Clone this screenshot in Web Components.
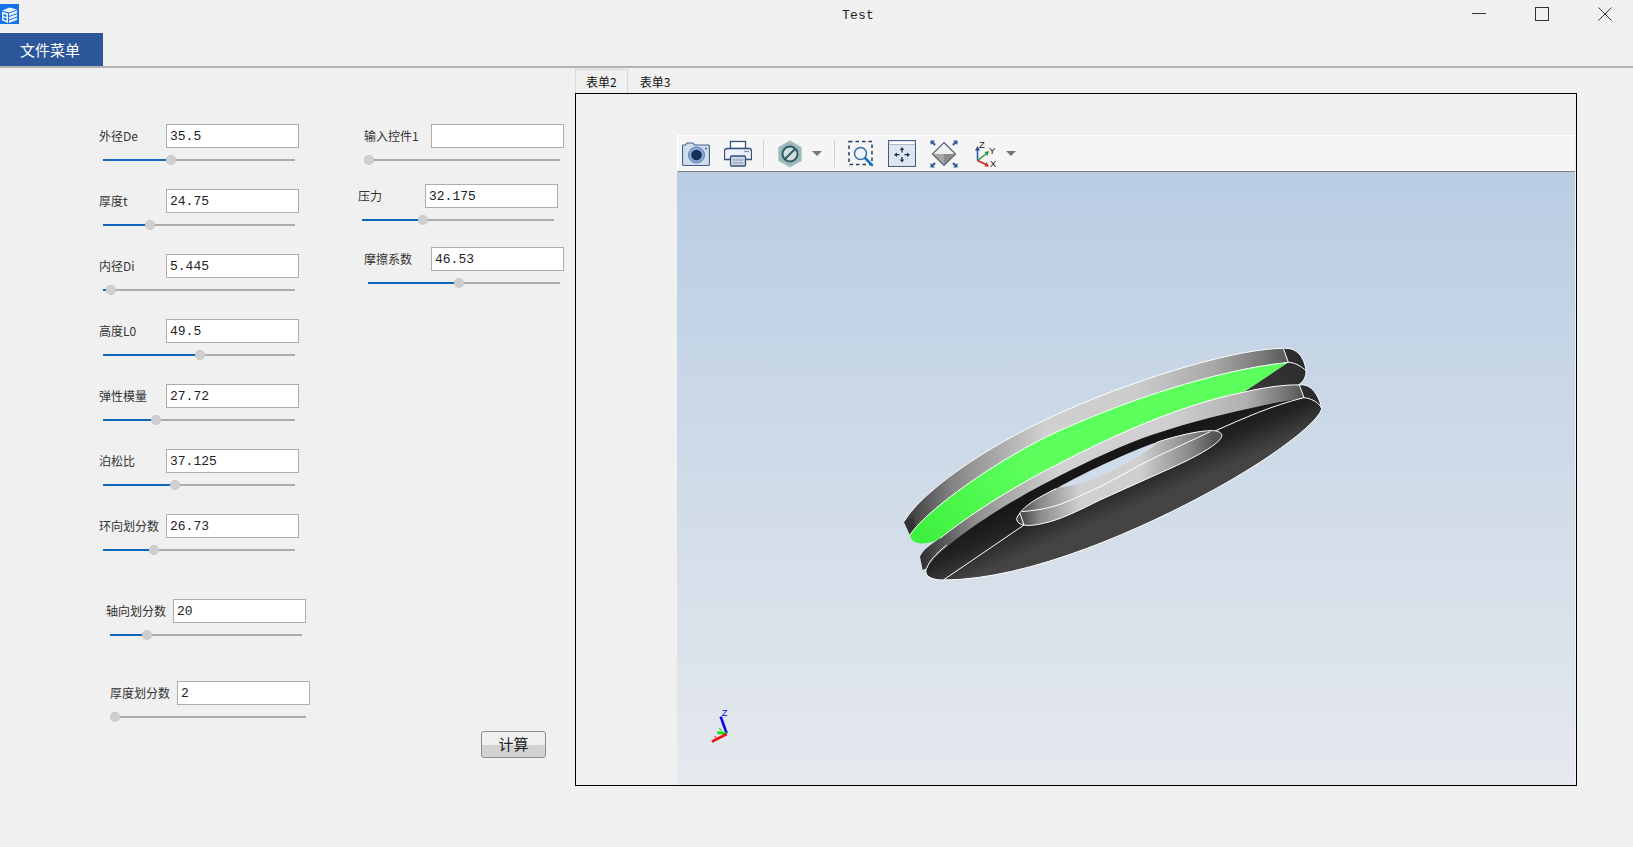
<!DOCTYPE html>
<html lang="zh">
<head>
<meta charset="utf-8">
<title>Test</title>
<style>
  html, body { margin: 0; height: 100%; background: #f0f0f0; overflow: hidden; }
  body { font-family: "Noto Sans CJK SC", "Liberation Sans", sans-serif; }
</style>
</head>
<body>
<app-window>
  <title-bar slot="top" caption="Test"></title-bar>
  <menu-bar slot="top" caption="文件菜单"></menu-bar>
  <form-panel slot="left">
    <form-field label="外径De" value="35.5" pos="68"></form-field>
    <form-field label="厚度t" value="24.75" pos="47"></form-field>
    <form-field label="内径Di" value="5.445" pos="8"></form-field>
    <form-field label="高度L0" value="49.5" pos="97"></form-field>
    <form-field label="弹性模量" value="27.72" pos="53"></form-field>
    <form-field label="泊松比" value="37.125" pos="72"></form-field>
    <form-field label="环向划分数" value="26.73" pos="51" gap="37"></form-field>
    <form-field label="轴向划分数" value="20" pos="37" shift="7" gap="34"></form-field>
    <form-field label="厚度划分数" value="2" pos="1" shift="11"></form-field>

    <form-field slot="right" label="输入控件1" value="" pos="1" gap="12"></form-field>
    <form-field slot="right" label="压力" value="32.175" pos="61" shift="-6" gap="15"></form-field>
    <form-field slot="right" label="摩擦系数" value="46.53" pos="91" gap="0"></form-field>
    <push-button slot="right" caption="计算"></push-button>
  </form-panel>
  <tab-view slot="right" first="表单2" second="表单3">
    <view-port>
      <view-toolbar slot="bar"></view-toolbar>
      <part-model></part-model>
      <axis-triad></axis-triad>
    </view-port>
  </tab-view>
</app-window>

<script>
class AppWindow extends HTMLElement {
  connectedCallback() {
    this.attachShadow({ mode: 'open' });
    this.shadowRoot.innerHTML = `
      <style>
        :host { display: flex; flex-direction: column; width: 1633px; height: 847px; background: #f0f0f0; }
        .main { display: flex; align-items: flex-start; }
      </style>
      <slot name="top"></slot>
      <div class="main">
        <slot name="left"></slot>
        <slot name="right"></slot>
      </div>
    `;
  }
}

class TitleBar extends HTMLElement {
  connectedCallback() {
    this.attachShadow({ mode: 'open' });
    this.shadowRoot.innerHTML = `
      <style>
        :host { display: grid; grid-template-columns: 842px auto 1fr; height: 33px; align-items: start; }
        .logo { display: block; margin-top: 4px; }
        .caption { font: 13px/31px "Liberation Mono", monospace; color: #222; letter-spacing: .2px; }
        .controls { display: flex; justify-content: flex-end; gap: 49px; padding: 7px 21px 0 0; }
        .controls svg { display: block; }
      </style>
      <svg class="logo" width="19" height="20" viewBox="0 0 19 20">
        <rect width="19" height="20" fill="#1473e6"/>
        <path d="M2 6.500 L9.500 3.500 L17 5.500 L9 8.500 Z" fill="#f2f7fd"/>
        <path d="M2 7.500 L8 9.500 V19 L2 16.500 Z" fill="#e6f0fb"/>
        <path d="M3.500 10 L6.500 11 V13 L3.500 12 Z M3.500 13.500 L6.500 14.500 V16.500 L3.500 15.500 Z" fill="#1473e6"/>
        <path d="M9 9.500 L17 6.500 V9 L9 12 Z M9 13 L17 10 V12.500 L9 15.500 Z M9 16.500 L17 13.500 V16 L9 19 Z" fill="#f2f7fd"/>
      </svg>
      <div class="caption">${this.getAttribute('caption')}</div>
      <div class="controls">
        <svg width="14" height="14" viewBox="0 0 14 14"><path d="M0 6.500 H14" stroke="#333" stroke-width="1"/></svg>
        <svg width="14" height="14" viewBox="0 0 14 14"><rect x="0.500" y="0.500" width="13" height="13" fill="none" stroke="#333" stroke-width="1"/></svg>
        <svg width="14" height="14" viewBox="0 0 14 14"><path d="M0.500 0.500 L13.500 13.500 M13.500 0.500 L0.500 13.500" stroke="#333" stroke-width="1"/></svg>
      </div>
    `;
  }
}

class MenuBar extends HTMLElement {
  connectedCallback() {
    this.attachShadow({ mode: 'open' });
    this.shadowRoot.innerHTML = `
      <style>
        :host { display: block; height: 33px; border-bottom: 2px solid #b2b2b2; }
        .item {
          width: 103px; height: 33px; box-sizing: border-box; padding-right: 3px; background: #2b579a; color: #fff;
          font-size: 15px; line-height: 33px; text-align: center;
        }
      </style>
      <div class="item">${this.getAttribute('caption')}</div>
    `;
  }
}

class FormPanel extends HTMLElement {
  connectedCallback() {
    this.attachShadow({ mode: 'open' });
    this.shadowRoot.innerHTML = `
      <style>
        :host { display: flex; width: 575px; flex: none; box-sizing: border-box; padding: 56px 0 0 99px; }
        .col { display: flex; flex-direction: column; width: 265px; flex: none; }
      </style>
      <div class="col"><slot></slot></div>
      <div class="col"><slot name="right"></slot></div>
    `;
  }
}

class FormField extends HTMLElement {
  connectedCallback() {
    const pos = Number(this.getAttribute('pos'));
    const shift = this.getAttribute('shift') || 0;
    const gap = this.getAttribute('gap') || 17;
    this.attachShadow({ mode: 'open' });
    this.shadowRoot.innerHTML = `
      <style>
        :host { display: block; height: 48px; margin-left: ${shift}px; margin-bottom: ${gap}px; flex: none; }
        .row { display: flex; align-items: center; height: 24px; }
        .label { width: 67px; flex: none; font-size: 12px; color: #333; white-space: nowrap; padding-bottom: 2px; }
        .input {
          width: 133px; height: 24px; box-sizing: border-box; border: 1px solid #adadad; background: #fff;
          padding: 2px 0 0 3px; font: 13px/20px "Liberation Mono", monospace; color: #222;
        }
        .track { position: relative; width: 192px; height: 2px; margin: 11px 0 0 4px; background: #acacac; }
        .fill { position: absolute; left: 0; top: 0; height: 2px; width: ${pos}px; background: #0f68bb; }
        .thumb {
          position: absolute; left: ${pos - 5}px; top: -4px; width: 10px; height: 10px; border-radius: 50%;
          background: #cfcfcf; outline: 1px dotted #c4c4c4; outline-offset: -1px;
        }
      </style>
      <div class="row">
        <div class="label">${this.getAttribute('label')}</div>
        <div class="input">${this.getAttribute('value')}</div>
      </div>
      <div class="track"><div class="fill"></div><div class="thumb"></div></div>
    `;
  }
}

class PushButton extends HTMLElement {
  connectedCallback() {
    this.attachShadow({ mode: 'open' });
    this.shadowRoot.innerHTML = `
      <style>
        :host {
          display: block; width: 65px; height: 27px; box-sizing: border-box; margin: 436px 0 0 117px;
          border: 1px solid #8c8c8c; border-radius: 3px; flex: none;
          background: linear-gradient(#f0f0f0 0 50%, #d2d2d2 50% 100%);
          font-size: 15px; line-height: 23px; text-align: center; color: #222;
        }
      </style>
      ${this.getAttribute('caption')}
    `;
  }
}

class TabView extends HTMLElement {
  connectedCallback() {
    this.attachShadow({ mode: 'open' });
    this.shadowRoot.innerHTML = `
      <style>
        :host { display: block; width: 1002px; flex: none; margin-top: 1px; font-size: 12px; color: #111; }
        .tabs { display: flex; height: 24px; }
        .tab { box-sizing: border-box; height: 24px; padding: 0 12px; line-height: 26px; }
        .tab.on { border: 1px solid #d9d9d9; border-bottom: 0; padding: 0 10px; line-height: 24px; }
        .pane { box-sizing: border-box; height: 693px; border: 1px solid #000; padding: 41px 1px 0 101px; }
      </style>
      <div class="tabs">
        <div class="tab on">${this.getAttribute('first')}</div>
        <div class="tab">${this.getAttribute('second')}</div>
      </div>
      <div class="pane"><slot></slot></div>
    `;
  }
}

class ViewPort extends HTMLElement {
  connectedCallback() {
    this.attachShadow({ mode: 'open' });
    this.shadowRoot.innerHTML = `
      <style>
        :host { display: flex; flex-direction: column; height: 650px; }
        .scene { position: relative; flex: 1; background: linear-gradient(#b9cde3, #e6e9ee); }
      </style>
      <slot name="bar"></slot>
      <div class="scene"><slot></slot></div>
    `;
  }
}

class ViewToolbar extends HTMLElement {
  connectedCallback() {
    this.attachShadow({ mode: 'open' });
    this.shadowRoot.innerHTML = `
      <style>
        :host {
          display: flex; align-items: center; height: 37px; box-sizing: border-box; padding-left: 4px;
          background: #f5f5f5; border-top: 1px solid #fff; border-left: 1px solid #fff; border-bottom: 1px solid #7f7f7f;
          flex: none;
        }
        svg { display: block; flex: none; }
        .sep { width: 1px; height: 27px; background: #d2d2d2; flex: none; }
        .arrow { width: 0; height: 0; border: 5px solid transparent; border-top: 5px solid #777; border-bottom: 0; flex: none; }
      </style>
      <!-- camera -->
      <svg width="28" height="28" viewBox="0 0 28 28">
        <path d="M1.500 5 H3.500 L5 3 H11 L12.500 5 H26 Q27.500 5 27.500 6.500 V24 Q27.500 25.500 26 25.500 H2 Q0.500 25.500 0.500 24 V6.500 Q0.500 5 1.500 5 Z" fill="#cfddef" stroke="#42608f" stroke-width="1.200"/>
        <circle cx="14.500" cy="15" r="8" fill="#8ea9cf" stroke="#5f80ae"/>
        <circle cx="14.500" cy="15" r="5.300" fill="#15305f"/>
        <circle cx="24" cy="8.500" r="1" fill="#42608f"/>
      </svg>
      <!-- printer -->
      <svg style="margin-left:14px" width="28" height="28" viewBox="0 0 28 28">
        <rect x="6.500" y="1.500" width="15" height="7" fill="#fff" stroke="#33527f" stroke-width="1.300"/>
        <path d="M3 8.500 H25 Q27.500 8.500 27.500 11 V19.500 H0.500 V11 Q0.500 8.500 3 8.500 Z" fill="#eef2f8" stroke="#33527f" stroke-width="1.300"/>
        <rect x="6.500" y="16" width="15" height="10" rx="1" fill="#cdd6e3" stroke="#33527f" stroke-width="1.300"/>
        <path d="M9 20 H19 M9 23 H19" stroke="#8798b2" stroke-width="1"/>
        <path d="M20 11.500 H25" stroke="#8798b2" stroke-width="1.500"/>
      </svg>
      <div class="sep" style="margin-left:11px"></div>
      <!-- no-show -->
      <svg style="margin-left:14px" width="24" height="28" viewBox="0 0 24 28">
        <path d="M12 0.800 L23.300 7.300 V20.700 L12 27.200 L0.700 20.700 V7.300 Z" fill="#9db8ba" stroke="#b6cacb"/>
        <circle cx="12" cy="14" r="7.500" fill="#d3dfdf" stroke="#2f5c66" stroke-width="2"/>
        <path d="M7 19 L17 9" stroke="#2f5c66" stroke-width="2"/>
      </svg>
      <div class="arrow" style="margin-left:10px"></div>
      <div class="sep" style="margin-left:12px"></div>
      <!-- zoom box -->
      <svg style="margin-left:13px" width="26" height="28" viewBox="0 0 26 28">
        <rect x="1" y="1.500" width="23" height="23" fill="none" stroke="#22406f" stroke-width="1.500" stroke-dasharray="3.500 3"/>
        <circle cx="12.500" cy="13.500" r="6" fill="#eef3f9" stroke="#3e6aa3" stroke-width="1.500"/>
        <path d="M17 18 L24 25" stroke="#1a72c4" stroke-width="2.500" stroke-linecap="round"/>
      </svg>
      <!-- fit all -->
      <svg style="margin-left:14px" width="28" height="28" viewBox="0 0 28 28">
        <rect x="0.500" y="0.500" width="27" height="26" fill="#dfe5ef" stroke="#3d5a88"/>
        <rect x="1" y="1" width="26" height="3.500" fill="#fff" stroke="#7f93b2" stroke-width="0.600"/>
        <path d="M14 9 V12.500 M14 17 V20.500 M8 14.700 H11.500 M16.500 14.700 H20" stroke="#16305c" stroke-width="1.300"/>
        <path d="M14 7 L16.200 10 H11.800 Z M14 22.500 L16.200 19.500 H11.800 Z M6 14.700 L9 12.500 V17 Z M22 14.700 L19 12.500 V17 Z" fill="#16305c"/>
      </svg>
      <!-- isometric -->
      <svg style="margin-left:14px" width="28" height="28" viewBox="0 0 28 28">
        <path d="M14 2.500 L25.500 14 H2.500 Z" fill="#efefef"/>
        <path d="M14 25.500 L25.500 14 H2.500 Z" fill="#a6a6a6"/>
        <path d="M14 14 L25.500 14 L14 25.500 Z" fill="#8c8c8c"/>
        <path d="M14 2.500 L25.500 14 L14 25.500 L2.500 14 Z" fill="none" stroke="#5b6470" stroke-width="1.200"/>
        <path d="M0.500 0.500 H5 L3.500 2 L5.800 4.300 L4.300 5.800 L2 3.500 L0.500 5 Z" fill="#2c5a94"/>
        <path d="M27.500 0.500 H23 L24.500 2 L22.200 4.300 L23.700 5.800 L26 3.500 L27.500 5 Z" fill="#2c5a94"/>
        <path d="M0.500 27.500 H5 L3.500 26 L5.800 23.700 L4.300 22.200 L2 24.500 L0.500 23 Z" fill="#2c5a94"/>
        <path d="M27.500 27.500 H23 L24.500 26 L22.200 23.700 L23.700 22.200 L26 24.500 L27.500 23 Z" fill="#2c5a94"/>
      </svg>
      <!-- axes -->
      <svg style="margin-left:17px" width="24" height="30" viewBox="0 0 24 30">
        <path d="M2.500 21.500 V10" stroke="#2553a0" stroke-width="1.500"/>
        <path d="M2.500 7 L5 11.500 H0 Z" fill="#2553a0"/>
        <path d="M2.500 21.500 L11 15" stroke="#1f9a3a" stroke-width="1.500"/>
        <path d="M14 12 L9.500 13 L12.500 17 Z" fill="#1f9a3a"/>
        <path d="M2.500 21.500 L11 25.500" stroke="#d9242a" stroke-width="1.500"/>
        <path d="M14 27.500 L9.500 27.500 L11.500 23 Z" fill="#d9242a"/>
        <text x="4" y="9" font-family="Liberation Sans" font-size="9.500" fill="#222">Z</text>
        <text x="14" y="15" font-family="Liberation Sans" font-size="9.500" fill="#222">Y</text>
        <text x="15" y="28" font-family="Liberation Sans" font-size="9.500" fill="#222">X</text>
      </svg>
      <div class="arrow" style="margin-left:7px"></div>
    `;
  }
}

class PartModel extends HTMLElement {
  connectedCallback() {
    this.attachShadow({ mode: 'open' });
    this.shadowRoot.innerHTML = `
      <style>
        :host { position: absolute; left: 203px; top: 158px; width: 460px; height: 260px; }
        svg { display: block; }
        .edge { fill: none; stroke: #fff; stroke-width: 3; }
      </style>
      <svg width="460" height="260" viewBox="0 0 1380 780">
        <defs>
          <linearGradient id="rim" gradientUnits="userSpaceOnUse" x1="80" y1="0" x2="1230" y2="0">
            <stop offset="0" stop-color="#3a3a3a"/>
            <stop offset=".12" stop-color="#858585"/>
            <stop offset=".36" stop-color="#d0d0d0"/>
            <stop offset=".6" stop-color="#cccccc"/>
            <stop offset=".8" stop-color="#a8a8a8"/>
            <stop offset=".93" stop-color="#777"/>
            <stop offset="1" stop-color="#555"/>
          </linearGradient>
          <linearGradient id="rim2" gradientUnits="userSpaceOnUse" x1="125" y1="0" x2="1270" y2="0">
            <stop offset="0" stop-color="#303030"/>
            <stop offset=".14" stop-color="#8f8f8f"/>
            <stop offset=".36" stop-color="#d2d2d2"/>
            <stop offset=".65" stop-color="#cfcfcf"/>
            <stop offset=".85" stop-color="#b0b0b0"/>
            <stop offset=".95" stop-color="#777"/>
            <stop offset="1" stop-color="#555"/>
          </linearGradient>
          <linearGradient id="face" gradientUnits="userSpaceOnUse" x1="450" y1="500" x2="510" y2="640">
            <stop offset="0" stop-color="#171717"/>
            <stop offset=".45" stop-color="#222"/>
            <stop offset="1" stop-color="#444"/>
          </linearGradient>
          <linearGradient id="green" gradientUnits="userSpaceOnUse" x1="100" y1="640" x2="420" y2="400">
            <stop offset="0" stop-color="#3cf03c"/>
            <stop offset="1" stop-color="#5cff5c"/>
          </linearGradient>
          <linearGradient id="wall" gradientUnits="userSpaceOnUse" x1="420" y1="0" x2="1020" y2="0">
            <stop offset="0" stop-color="#444"/>
            <stop offset=".1" stop-color="#8a8a8a"/>
            <stop offset=".3" stop-color="#d0d0d0"/>
            <stop offset=".6" stop-color="#cfcfcf"/>
            <stop offset=".85" stop-color="#8a8a8a"/>
            <stop offset=".97" stop-color="#555"/>
          </linearGradient>
          <linearGradient id="cap" gradientUnits="userSpaceOnUse" x1="1090" y1="190" x2="1280" y2="90">
            <stop offset="0" stop-color="#3c3c3c"/>
            <stop offset="1" stop-color="#2a2a2a"/>
          </linearGradient>
        </defs>

        <!-- back disc -->
        <path d="M72 575 C130 480 330 340 560 240 C800 135 1080 55 1210 55 L1225 97 C1000 120 700 225 500 320 C320 410 130 550 90 615 Z" fill="url(#rim)"/>
        <path d="M72 575 L90 615 L110 600 L100 560 Z" fill="#333"/>
        <path d="M1210 55 C1250 52 1272 80 1278 120 C1280 145 1265 160 1250 168 L1090 187 L1225 97 Z" fill="url(#cap)"/>
        <path class="edge" d="M72 575 C130 480 330 340 560 240 C800 135 1080 55 1210 55 C1250 52 1272 80 1278 120 C1280 145 1265 160 1250 168"/>
        <path class="edge" d="M1210 55 L1225 97"/>
        <path d="M90 615 C130 550 320 410 500 320 C700 225 1000 120 1225 97 L1090 187 C900 225 700 315 500 420 C350 500 250 570 180 625 C150 645 95 650 90 615 Z" fill="url(#green)"/>
        <path class="edge" d="M90 615 C130 550 320 410 500 320 C700 225 1000 120 1225 97 C1245 97 1265 110 1278 122"/>

        <!-- front disc -->
        <path d="M120 680 C130 660 150 645 180 625 C250 570 350 500 500 420 C700 315 900 225 1090 187 C1150 172 1220 163 1258 165 L1272 203 C1130 225 900 280 760 335 C650 380 560 425 480 468 C400 510 180 640 140 715 L128 720 Z" fill="url(#rim2)"/>
        <path d="M1258 165 C1290 160 1315 190 1325 235 L1272 203 Z" fill="#2b2b2b"/>
        <path d="M140 715 C180 640 400 510 480 468 C560 425 650 380 760 335 C900 280 1130 225 1272 203 C1300 205 1320 215 1325 235 C1320 270 1200 370 1000 480 C800 590 450 750 190 750 C150 750 130 735 140 715 Z" fill="url(#face)"/>
        <path class="edge" d="M1090 187 C1150 172 1220 163 1258 165 C1290 160 1315 190 1325 235 C1320 270 1200 370 1000 480 C800 590 450 750 190 750 C150 750 130 735 140 715"/>
        <path class="edge" d="M180 625 C250 570 350 500 500 420 C700 315 900 225 1090 187"/>
        <path class="edge" d="M1258 165 L1272 203 C1292 205 1315 215 1325 235"/>
        <path class="edge" d="M1272 203 C1180 225 1090 265 1005 303 M140 715 C150 690 165 675 200 645"/>

        <!-- hole -->
        <path d="M410 565 C425 530 470 505 530 475 C610 430 740 368 830 337 C880 320 960 300 1000 302 C1020 303 1028 312 1025 320 C1015 345 940 385 860 420 L660 510 C600 540 540 570 490 580 C450 590 410 590 410 565 Z" fill="url(#wall)"/>
        <path d="M535 473 C600 437 730 372 835 336 C800 368 720 415 660 440 C620 455 570 470 535 473 Z" fill="#cfdcea"/>
        <path class="edge" d="M530 475 C470 505 425 530 410 565 C410 590 450 590 490 580 C540 570 600 540 660 510 L860 420 C940 385 1015 345 1025 320 C1028 312 1020 303 1000 302 C960 300 880 320 830 337"/>
        <path class="edge" d="M425 545 C450 542 480 540 510 532 C560 520 610 492 660 470 C710 445 760 415 810 390 C870 360 940 330 990 305"/>
        <path class="edge" d="M420 550 L432 585 L190 750"/>
      </svg>
    `;
  }
}

class AxisTriad extends HTMLElement {
  connectedCallback() {
    this.attachShadow({ mode: 'open' });
    this.shadowRoot.innerHTML = `
      <style>
        :host { position: absolute; left: 13px; top: 518px; width: 60px; height: 60px; }
        svg { display: block; }
      </style>
      <svg width="60" height="60" viewBox="0 0 180 180">
        <path d="M110 130 L92 80" stroke="#0a0af0" stroke-width="8"/>
        <path d="M110 130 L82 128" stroke="#10e010" stroke-width="8"/>
        <path d="M88 114 L96 124" stroke="#10e010" stroke-width="3"/>
        <path d="M110 132 L66 155" stroke="#f01010" stroke-width="8"/>
        <path d="M74 138 L82 150" stroke="#f01010" stroke-width="3"/>
        <text x="95" y="78" font-family="Liberation Sans" font-size="28" fill="#0a0af0">Z</text>
      </svg>
    `;
  }
}

customElements.define('app-window', AppWindow);
customElements.define('title-bar', TitleBar);
customElements.define('menu-bar', MenuBar);
customElements.define('form-panel', FormPanel);
customElements.define('form-field', FormField);
customElements.define('push-button', PushButton);
customElements.define('tab-view', TabView);
customElements.define('view-port', ViewPort);
customElements.define('view-toolbar', ViewToolbar);
customElements.define('part-model', PartModel);
customElements.define('axis-triad', AxisTriad);
</script>
</body>
</html>
